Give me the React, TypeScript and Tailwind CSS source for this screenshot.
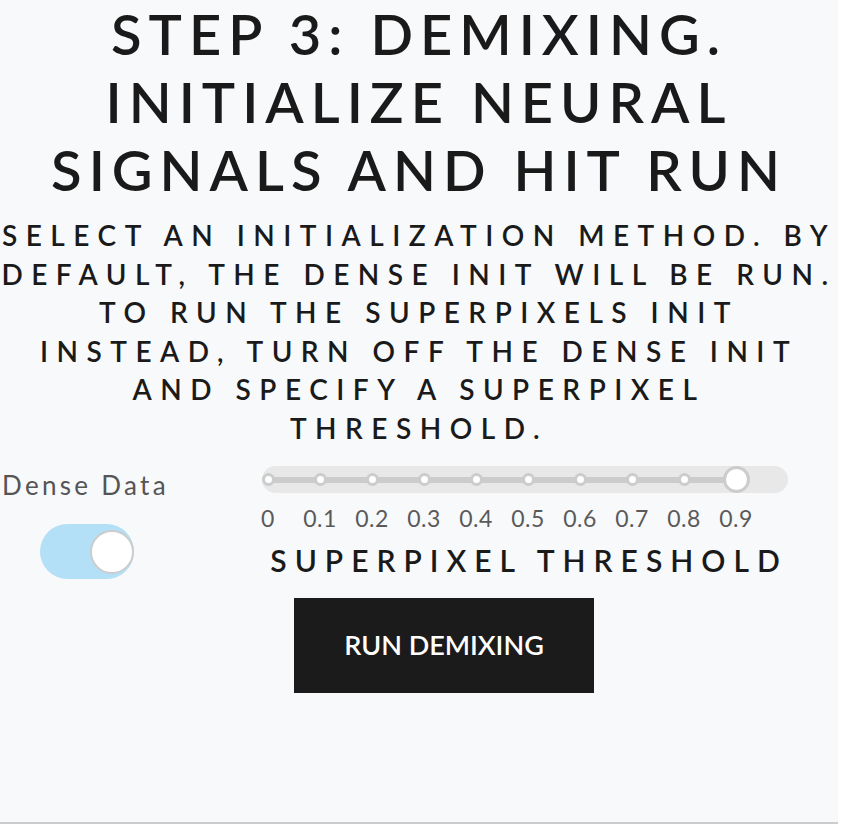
import React, { useState } from 'react';

const MARKS = ['0', '0.1', '0.2', '0.3', '0.4', '0.5', '0.6', '0.7', '0.8', '0.9'];

function ThresholdSlider({ value }: { value: number }) {
  return (
    <div className="flex w-[526px] flex-col items-center">
      <div className="relative h-[27px] w-[526px] rounded-full bg-[#e8e8e8]">
        <div className="absolute left-[6px] top-[11px] h-[6px] w-[468px] bg-[#cccccc]" />
        <div className="absolute left-[6px] top-0 flex h-[27px] w-[468px] items-center justify-between">
          {MARKS.map((m, i) => (
            <div key={m} className="flex w-0 items-center justify-center">
              {i === value ? (
                <span className="block h-[27px] w-[27px] shrink-0 rounded-full border-[3px] border-[#cccccc] bg-white" />
              ) : (
                <span className="block h-[13px] w-[13px] shrink-0 rounded-full border-[3px] border-[#cccccc] bg-white" />
              )}
            </div>
          ))}
        </div>
      </div>
      <div className="mt-[12px] flex w-[468px] -translate-x-[23px] justify-between text-[23px] leading-[26px] tracking-[0.5px] text-[#5a5a5a]">
        {MARKS.map((m) => (
          <div key={m} className="flex w-0 justify-center">
            <span className="whitespace-nowrap">{m}</span>
          </div>
        ))}
      </div>
    </div>
  );
}

export default function App() {
  const [dense, setDense] = useState(true);

  return (
    <div
      className="h-[824px] w-[838px] border-b-2 border-[#cccccc] bg-[#f8f9fa] text-[#1a1a1a]"
      style={{ fontFamily: 'Lato, "Open Sans", sans-serif' }}
    >
      <h1 className="text-center text-[56px] font-semibold leading-[68px] tracking-[7px]">
        STEP 3: DEMIXING.
        <br />
        INITIALIZE NEURAL
        <br />
        SIGNALS AND HIT RUN
      </h1>

      <p className="mt-[12px] text-center text-[28px] font-semibold leading-[38.5px] tracking-[8.5px]">
        SELECT AN INITIALIZATION METHOD. BY
        <br />
        DEFAULT, THE DENSE INIT WILL BE RUN.
        <br />
        TO RUN THE SUPERPIXELS INIT
        <br />
        INSTEAD, TURN OFF THE DENSE INIT
        <br />
        AND SPECIFY A SUPERPIXEL
        <br />
        THRESHOLD.
      </p>

      <div className="mt-[19px] flex">
        <div className="flex w-[262px] flex-col items-start">
          <span className="ml-[2px] mt-[4px] text-[26px] leading-[30px] tracking-[3.3px] text-[#555555]">
            Dense Data
          </span>
          <button
            type="button"
            onClick={() => setDense(!dense)}
            className={`ml-[40px] mt-[24px] flex h-[55px] w-[94px] items-center rounded-full ${
              dense ? 'justify-end bg-[#b3dff7]' : 'justify-start bg-[#e0e0e0]'
            }`}
          >
            <span className="block h-[44px] w-[44px] rounded-full border-2 border-[#cccccc] bg-white" />
          </button>
        </div>

        <div className="flex flex-col items-center">
          <ThresholdSlider value={9} />
          <div className="mt-[11px] pl-[8px] text-[30px] font-semibold leading-[36px] tracking-[8px]">
            SUPERPIXEL THRESHOLD
          </div>
        </div>
      </div>

      <div className="mt-[19px] flex pl-[294px]">
        <button
          type="button"
          className="flex h-[95px] w-[300px] items-center justify-center bg-[#1b1b1b] text-[27px] font-semibold text-white"
        >
          RUN DEMIXING
        </button>
      </div>
    </div>
  );
}
